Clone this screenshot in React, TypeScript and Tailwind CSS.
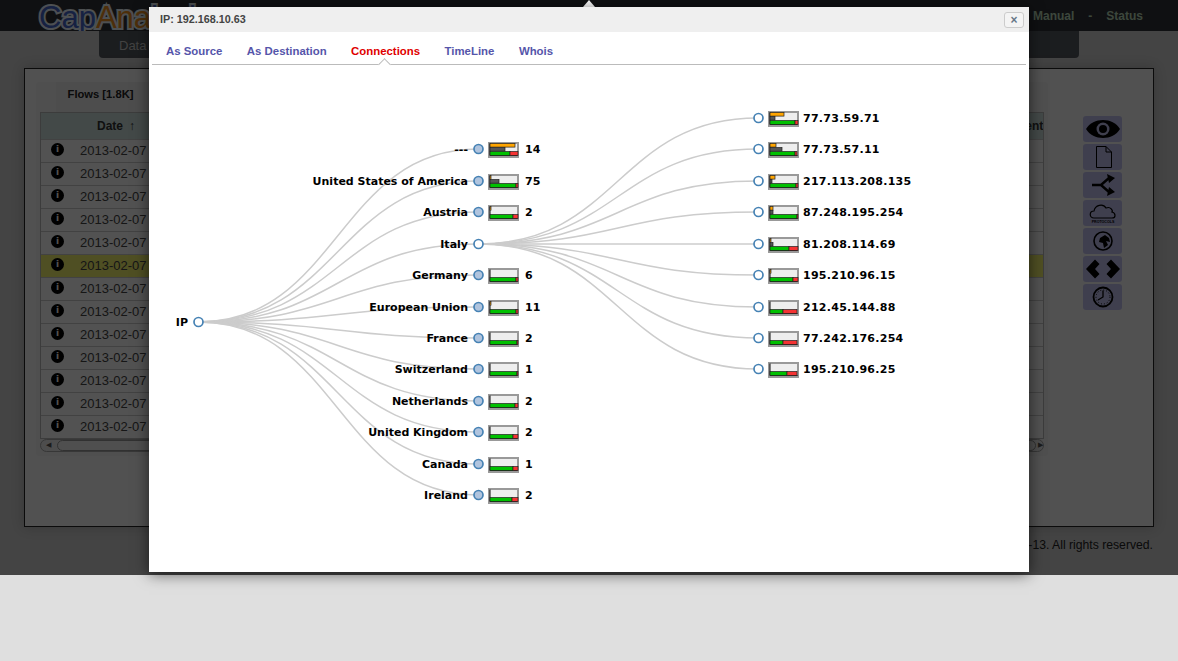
import React from 'react';

interface Bar {
  orange: number;
  gray: number;
  green: number;
  red: number;
}

interface TreeNode extends Bar {
  label: string;
  y: number;
  count?: number;
  open?: boolean;
}

const countries: TreeNode[] = [
  { label: '---', y: 149, count: 14, orange: 25, gray: 15, green: 20, red: 8 },
  { label: 'United States of America', y: 181, count: 75, orange: 1, gray: 9, green: 26, red: 2 },
  { label: 'Austria', y: 212, count: 2, orange: 1, gray: 0, green: 23, red: 5 },
  { label: 'Italy', y: 244, open: true, orange: 0, gray: 0, green: 0, red: 0 },
  { label: 'Germany', y: 275, count: 6, orange: 0, gray: 0, green: 26, red: 2 },
  { label: 'European Union', y: 307, count: 11, orange: 1, gray: 0, green: 26, red: 2 },
  { label: 'France', y: 338, count: 2, orange: 0, gray: 0, green: 27, red: 1 },
  { label: 'Switzerland', y: 369, count: 1, orange: 0, gray: 0, green: 27, red: 1 },
  { label: 'Netherlands', y: 401, count: 2, orange: 0, gray: 0, green: 25, red: 3 },
  { label: 'United Kingdom', y: 432, count: 2, orange: 0, gray: 0, green: 23, red: 5 },
  { label: 'Canada', y: 464, count: 1, orange: 0, gray: 0, green: 23, red: 5 },
  { label: 'Ireland', y: 495, count: 2, orange: 0, gray: 0, green: 22, red: 6 },
];

const hosts: TreeNode[] = [
  { label: '77.73.59.71', y: 118, orange: 14, gray: 5, green: 25, red: 3 },
  { label: '77.73.57.11', y: 149, orange: 6, gray: 12, green: 25, red: 2 },
  { label: '217.113.208.135', y: 181, orange: 5, gray: 2, green: 26, red: 2 },
  { label: '87.248.195.254', y: 212, orange: 3, gray: 3, green: 27, red: 1 },
  { label: '81.208.114.69', y: 244, orange: 1, gray: 3, green: 19, red: 9 },
  { label: '195.210.96.15', y: 275, orange: 1, gray: 0, green: 23, red: 5 },
  { label: '212.45.144.88', y: 307, orange: 0, gray: 0, green: 13, red: 14 },
  { label: '77.242.176.254', y: 338, orange: 0, gray: 0, green: 13, red: 14 },
  { label: '195.210.96.25', y: 369, orange: 0, gray: 0, green: 17, red: 10 },
];

const tabs = ['As Source', 'As Destination', 'Connections', 'TimeLine', 'Whois'];
const rows = Array.from({ length: 13 }, (_, i) => i);

function link(x0: number, y0: number, x1: number, y1: number) {
  const mid = (x0 + x1) / 2;
  return `M${x0},${y0}C${mid},${y0} ${mid},${y1} ${x1},${y1}`;
}

function MiniBars({ x, y, bar }: { x: number; y: number; bar: Bar }) {
  const left = x + 2;
  const top = y - 7;
  return (
    <g>
      <rect x={x + 1} y={top + 1} width={29} height={14} fill="#eeeeee" stroke="#999999" strokeWidth={2} />
      <path d={`M${left},${top + 1.5}V${top + 13.5}H${x + 29.5}`} fill="none" stroke="#111111" />
      {bar.orange > 0 && (
        <rect x={left} y={top + 1.5} width={bar.orange} height={3.6} fill="#ffa500" stroke="#222222" strokeWidth={0.7} />
      )}
      {bar.gray > 0 && (
        <rect x={left} y={top + 5.5} width={bar.gray} height={3.6} fill="#555555" stroke="#222222" strokeWidth={0.7} />
      )}
      <rect x={left} y={top + 9.5} width={bar.green} height={4} fill="#00c000" stroke="#222222" strokeWidth={0.7} />
      <rect x={left + bar.green} y={top + 9.5} width={bar.red} height={4} fill="#f43333" stroke="#222222" strokeWidth={0.7} />
    </g>
  );
}

function ConnectionTree() {
  const textClass = "text-[11px] font-bold font-['DejaVu_Sans',sans-serif]";
  return (
    <svg className="block" width={880} height={507} viewBox="149 65 880 507">
      <g fill="none" stroke="#cccccc" strokeWidth={1.5}>
        {countries.map((c) => (
          <path key={c.label} d={link(198, 322, 478, c.y)} />
        ))}
        {hosts.map((h) => (
          <path key={h.label} d={link(478, 244, 758, h.y)} />
        ))}
      </g>

      <circle cx={198.5} cy={322} r={4.5} fill="#ffffff" stroke="#4682b4" strokeWidth={1.7} />
      <text x={188} y={326} textAnchor="end" className={textClass}>
        IP
      </text>

      {countries.map((c) => (
        <g key={c.label}>
          <circle cx={478.5} cy={c.y} r={4.5} fill={c.open ? '#ffffff' : '#b0c4de'} stroke="#4682b4" strokeWidth={1.7} />
          <text x={468} y={c.y + 4} textAnchor="end" className={textClass}>
            {c.label}
          </text>
          {!c.open && <MiniBars x={488} y={c.y} bar={c} />}
          {!c.open && (
            <text x={525} y={c.y + 4} className={textClass}>
              {c.count}
            </text>
          )}
        </g>
      ))}

      {hosts.map((h) => (
        <g key={h.label}>
          <circle cx={758.5} cy={h.y} r={4.5} fill="#ffffff" stroke="#4682b4" strokeWidth={1.7} />
          <MiniBars x={768} y={h.y} bar={h} />
          <text x={803} y={h.y + 4} className={`${textClass} tracking-[0.27px]`}>
            {h.label}
          </text>
        </g>
      ))}
    </svg>
  );
}

function SideIcon({ children }: { children: React.ReactNode }) {
  return (
    <div className="flex h-[26px] w-[39px] items-center justify-center rounded-[3px] bg-[#c4c4f2]">
      <svg width={36} height={24} viewBox="0 0 36 24" className="block">
        {children}
      </svg>
    </div>
  );
}

function SideIcons() {
  return (
    <div className="flex flex-col gap-[2px]">
      <SideIcon>
        <path d="M1,12C8,0 28,0 35,12C28,24 8,24 1,12Z" fill="#000" />
        <circle cx={18} cy={12} r={6.5} fill="#c4c4f2" />
        <circle cx={18} cy={12} r={4} fill="#000" />
      </SideIcon>
      <SideIcon>
        <path d="M11.5,1.5H21L26.5,7V22.5H11.5Z M21,1.5V7H26.5" fill="none" stroke="#000" />
      </SideIcon>
      <SideIcon>
        <path d="M7,12H16L24,5M16,12L24,19" fill="none" stroke="#000" strokeWidth={2.4} />
        <path d="M22,1L30,5L24,10Z M22,23L30,19L24,14Z" fill="#000" />
      </SideIcon>
      <SideIcon>
        <path
          d="M9,17C4,17 4,10 9,10C10,4 18,2 21,7C26,5 28,10 27,11C31,12 31,17 27,17Z"
          fill="none"
          stroke="#000"
          strokeWidth={1.2}
        />
        <text x={18} y={22} textAnchor="middle" fontSize={3.6} fontWeight={700} fontFamily="Liberation Sans, sans-serif">
          PROTOCOLS
        </text>
      </SideIcon>
      <SideIcon>
        <circle cx={18} cy={12} r={9} fill="none" stroke="#000" strokeWidth={1.6} />
        <path d="M15,9L20,6L24,9L25,13L21,12L23,16L19,19L18,14L14,13Z" fill="#000" />
      </SideIcon>
      <SideIcon>
        <path d="M10,2.5L1,12L10,21.5L14.5,17L10,12L14.5,7Z M26,2.5L35,12L26,21.5L21.5,17L26,12L21.5,7Z" fill="#000" />
      </SideIcon>
      <SideIcon>
        <circle cx={18} cy={12} r={9.5} fill="none" stroke="#000" strokeWidth={1.8} />
        <circle cx={18} cy={12} r={7} fill="none" stroke="#000" strokeDasharray="1 2" />
        <path d="M18,5.5V12L13,15" fill="none" stroke="#000" strokeWidth={1.3} />
      </SideIcon>
    </div>
  );
}

function BackgroundPage() {
  return (
    <div className="flex h-full flex-col bg-[#d2d2d2] font-['Liberation_Sans',sans-serif]">
      <header className="flex h-[31px] shrink-0 items-center justify-between overflow-hidden bg-[#303338] pl-[39px] pr-[35px]">
        <span className="mt-[3px] text-[31px] leading-none text-[#4466cc] [-webkit-text-stroke:4px_#f0f8ff] [paint-order:stroke_fill]">
          Cap<span className="text-[#f09020]">Ana</span>lysis
        </span>
        <div className="flex gap-[14px] text-[12px] font-bold text-[#bcdcbc]">
          <span>Manual</span>
          <span>-</span>
          <span>Status</span>
        </div>
      </header>
      <nav className="mx-[99px] h-[27px] shrink-0 rounded-b-[4px] bg-[#555a60] pl-[20px] pt-[5px] text-[13px] text-[#cccccc]">
        Data
      </nav>

      <section className="mx-[24px] mt-[10px] flex h-[459px] shrink-0 items-start gap-[35px] border border-[#222222] bg-[#fbfbfb] pl-[11px] pt-[13px] shadow-[0_0_12px_rgba(0,0,0,0.2)]">
        <div className="flex h-[374px] w-[1012px] shrink-0 flex-col rounded-[3px] bg-[#f6f6f6] px-[4px]">
          <div className="ml-[16px] flex h-[30px] w-[89px] shrink-0 items-center justify-center bg-[#f0f0f0] pb-[6px] text-[11.2px] font-bold text-[#222222]">
            Flows [1.8K]
          </div>
          <div className="border border-[#bbbbbb] bg-white">
            <div className="flex h-[26px] items-center justify-between bg-[#cfe3e0] text-[12px] font-bold text-[#333333]">
              <span className="ml-[56px]">
                Date<span className="ml-[6px]">↑</span>
              </span>
              <span className="w-[45px] overflow-hidden whitespace-nowrap">Content</span>
            </div>
            {rows.map((r) => (
              <div
                key={r}
                className={`flex h-[23px] items-center border-t border-[#cccccc] text-[13px] text-[#444444] ${r === 5 ? 'bg-[#f6f66e]' : 'bg-white'}`}
              >
                <span className="ml-[10px] mb-[3px] flex h-[13px] w-[13px] items-center justify-center rounded-full bg-black font-['DejaVu_Sans',sans-serif] text-[9px] font-bold text-white">
                  i
                </span>
                <span className="ml-[16px]">2013-02-07</span>
              </div>
            ))}
          </div>
          <div className="flex h-[13px] items-center rounded-full border border-[#aaaaaa] bg-[#eeeeee] text-[7px] text-[#555555]">
            <span className="ml-[5px]">◀</span>
            <span className="ml-[6px] h-[11px] w-[980px] rounded-full border border-[#999999] bg-[#f4f4f4]" />
            <span className="ml-[2px]">▶</span>
          </div>
        </div>
        <div className="mt-[34px]">
          <SideIcons />
        </div>
      </section>

      <footer className="mr-[25px] mt-[9px] text-right text-[12.2px] text-[#222222]">
        © 2012-13. All rights reserved.
      </footer>
    </div>
  );
}

export default function App() {
  return (
    <div className="relative h-[661px] overflow-hidden bg-[#dfdfdf]">
      <div className="relative h-[575px] overflow-hidden">
        <BackgroundPage />
        <div className="absolute inset-0 bg-black/[.68]" />
      </div>

      {/* the arrow the dialog hangs from */}
      <div className="absolute left-[583px] top-0 h-0 w-0 border-x-[6px] border-b-[7px] border-x-transparent border-b-white" />

      <div className="absolute left-[149px] top-[7px] h-[565px] w-[880px] overflow-hidden bg-white font-['Liberation_Sans',sans-serif] shadow-[0_2px_14px_rgba(0,0,0,0.6)]">
        <div className="flex h-[25px] items-center justify-between bg-[#efefef] pl-[11px] pr-[5px]">
          <span className="text-[10.8px] font-bold text-[#444444]">IP: 192.168.10.63</span>
          <button className="flex h-[16px] w-[20px] items-center justify-center rounded-[3px] border border-[#cccccc] bg-[#f4f4f4] text-[12px] font-bold leading-none text-[#667788]">
            ×
          </button>
        </div>
        <div className="relative mx-[3px] flex h-[33px] items-center gap-[24.5px] border-b border-[#bbbbbb] pl-[14px] pt-[7px] text-[11.4px] font-bold text-[#5555aa]">
          {tabs.map((t) => (
            <span key={t} className={t === 'Connections' ? 'text-[#e00000]' : ''}>
              {t}
            </span>
          ))}
          <span className="absolute bottom-[-5px] left-[228px] h-[9px] w-[9px] rotate-45 border-l border-t border-[#bbbbbb] bg-white" />
        </div>
        <ConnectionTree />
      </div>
    </div>
  );
}
